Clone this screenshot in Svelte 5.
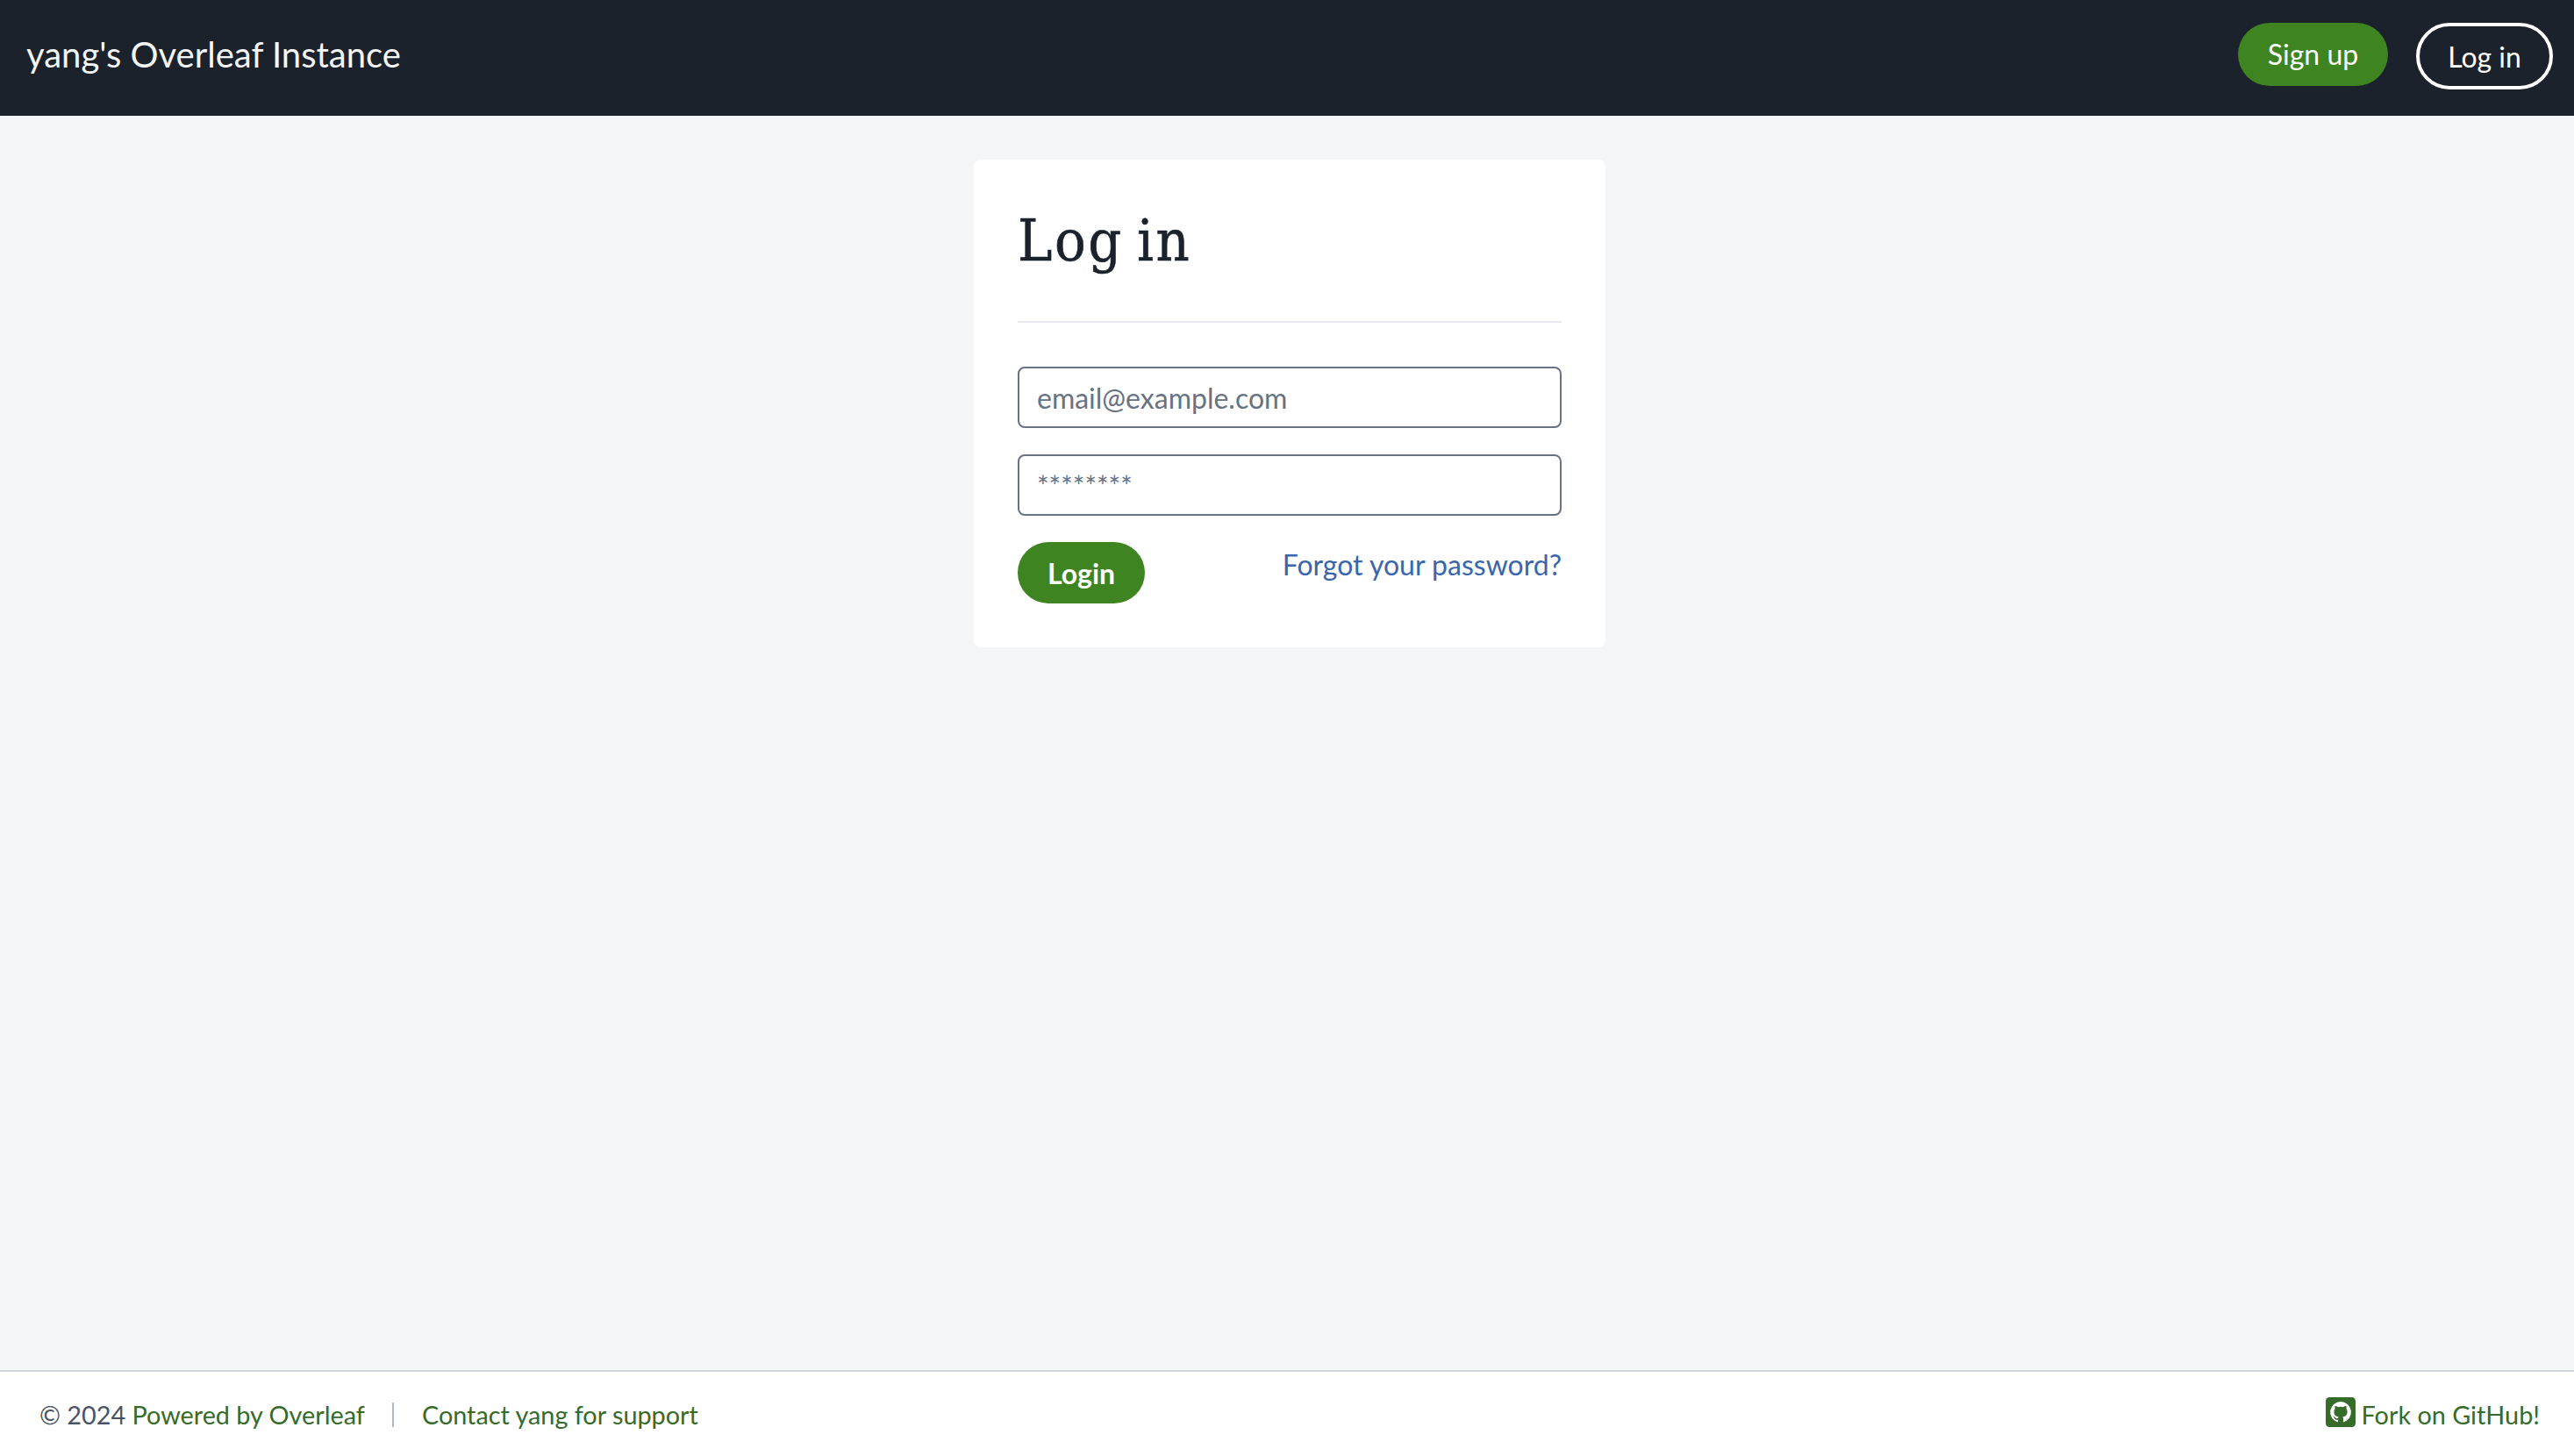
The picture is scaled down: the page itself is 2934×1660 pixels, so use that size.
<script>
  const title = "yang's Overleaf Instance";
</script>

<div class="page">
  <header class="nav">
    <span class="brand">{title}</span>
    <nav class="nav-actions">
      <a class="btn signup" href="#signup">Sign up</a>
      <a class="btn outline" href="#login">Log in</a>
    </nav>
  </header>

  <main class="content">
    <section class="card">
      <h1>Log in</h1>
      <hr />
      <form class="form">
        <input class="field" type="email" placeholder="email@example.com" />
        <input class="field" type="password" placeholder="********" />
        <div class="actions">
          <button class="login" type="button">Login</button>
          <a class="forgot" href="#forgot">Forgot your password?</a>
        </div>
      </form>
    </section>
  </main>

  <footer class="foot">
    <div class="foot-left">
      <span>© 2024 <a href="#o">Powered by Overleaf</a></span>
      <span class="sep"></span>
      <a href="#c">Contact yang for support</a>
    </div>
    <a class="fork" href="#gh">
      <svg class="gh" viewBox="0 0 16 16" aria-hidden="true">
        <rect width="16" height="16" rx="2" fill="currentColor" />
        <path fill="#fff" d="M8 2.4a5.6 5.6 0 0 0-1.77 10.91c.28.05.38-.12.38-.27v-.95c-1.56.34-1.89-.75-1.89-.75-.25-.65-.62-.82-.62-.82-.51-.35.04-.34.04-.34.56.04.86.58.86.58.5.86 1.31.61 1.63.47.05-.36.2-.61.36-.75-1.24-.14-2.55-.62-2.55-2.77 0-.61.22-1.11.58-1.5-.06-.14-.25-.71.05-1.48 0 0 .47-.15 1.54.57a5.3 5.3 0 0 1 2.8 0c1.07-.72 1.54-.57 1.54-.57.3.77.11 1.34.05 1.48.36.39.58.89.58 1.5 0 2.15-1.31 2.63-2.56 2.77.2.17.38.52.38 1.04v1.52c0 .15.1.32.39.27A5.6 5.6 0 0 0 8 2.4z" />
      </svg>
      <span>Fork on GitHub!</span>
    </a>
  </footer>
</div>

<style>
  :global(body) {
    margin: 0;
    background: #f4f5f6;
    font-family: "Lato", "Noto Sans", sans-serif;
  }
  .page {
    display: flex;
    flex-direction: column;
    min-height: 1660px;
  }
  a {
    text-decoration: none;
    color: inherit;
  }
  .nav {
    height: 132px;
    box-sizing: border-box;
    background: #1b222c;
    display: flex;
    align-items: center;
    justify-content: space-between;
    padding: 0 24px 8px 30px;
  }
  .brand {
    font-size: 40px;
    color: #f4f5f6;
  }
  .nav-actions {
    display: flex;
    align-items: flex-start;
    gap: 32px;
    padding-top: 4px;
  }
  .btn {
    box-sizing: border-box;
    display: flex;
    align-items: center;
    justify-content: center;
    border-radius: 40px;
    font-size: 32px;
    color: #fff;
  }
  .signup {
    width: 171px;
    height: 72px;
    padding-bottom: 2px;
    background: #3e8420;
  }
  .outline {
    width: 156px;
    height: 76px;
    border: 4px solid #fff;
  }
  .content {
    flex: 1;
    display: flex;
    justify-content: center;
    align-items: flex-start;
    padding: 50px 0 0 6px;
  }
  .card {
    box-sizing: border-box;
    width: 720px;
    background: #fff;
    border-radius: 8px;
    padding: 50px;
  }
  h1 {
    margin: 0;
    padding-top: 2px;
    font-family: "DejaVu Serif Condensed", "DejaVu Serif", serif;
    font-stretch: condensed;
    font-weight: 400;
    font-size: 66px;
    letter-spacing: 2.5px;
    word-spacing: -6px;
    -webkit-text-stroke: 0.6px #1b222c;
    line-height: 82px;
    color: #1b222c;
  }
  hr {
    border: 0;
    height: 2px;
    background: #e7e9ee;
    margin: 50px 0;
  }
  .form {
    display: flex;
    flex-direction: column;
    gap: 30px;
  }
  .field {
    box-sizing: border-box;
    width: 100%;
    height: 70px;
    border: 2px solid #677283;
    border-radius: 8px;
    padding: 1px 20px 0;
    font-family: inherit;
    font-size: 32px;
    background: #fff;
    color: #677283;
    outline: none;
  }
  .field::placeholder {
    color: #677283;
    opacity: 1;
  }
  .actions {
    display: flex;
    justify-content: space-between;
    align-items: flex-start;
  }
  .login {
    width: 145px;
    height: 70px;
    border: 0;
    border-radius: 40px;
    background: #3e8420;
    color: #fff;
    font-family: inherit;
    font-size: 32px;
    font-weight: 700;
    padding: 0;
  }
  .forgot {
    color: #3a66ad;
    font-size: 32px;
    line-height: 52px;
  }
  .foot {
    box-sizing: border-box;
    height: 98px;
    background: #fff;
    border-top: 2px solid #d0d4da;
    display: flex;
    justify-content: space-between;
    align-items: center;
    padding: 2px 39px 0 45px;
    font-size: 28.8px;
    color: #495365;
  }
  .foot a {
    color: #366b29;
  }
  .foot-left {
    display: flex;
    align-items: center;
  }
  .sep {
    width: 2px;
    height: 28px;
    background: #b0b6c2;
    margin: 0 32px 0 31px;
  }
  .foot .fork {
    display: flex;
    align-items: center;
    gap: 7px;
  }
  .gh {
    width: 34px;
    height: 34px;
    margin-top: -6px;
  }
</style>
